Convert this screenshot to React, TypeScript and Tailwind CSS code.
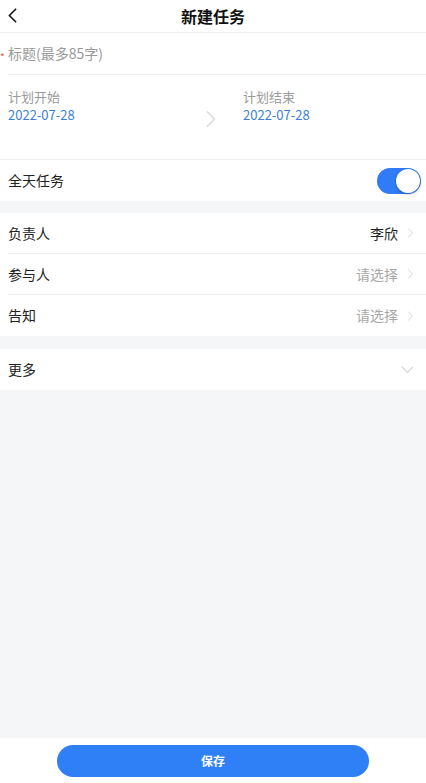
import React from 'react';

const font = { fontFamily: '"Noto Sans CJK SC", "Noto Sans", sans-serif' };

function ChevronRight({ className = '' }: { className?: string }) {
  return (
    <svg viewBox="0 0 10 16" className={className} fill="none">
      <path d="M2 2l6 6-6 6" stroke="currentColor" strokeWidth="1.4" strokeLinecap="round" strokeLinejoin="round" />
    </svg>
  );
}

function PickRow({ label, value, chosen, last }: { label: string; value: string; chosen?: boolean; last?: boolean }) {
  return (
    <div className="pl-2 bg-white">
      <div className={`h-[41px] flex items-center pr-[12px] ${last ? '' : 'border-b border-[#efefef]'}`}>
        <span className="text-[14px] text-[#222]">{label}</span>
        <span className={`ml-auto text-[14px] ${chosen ? 'text-[#222]' : 'text-[#a8a8a8]'}`}>{value}</span>
        <ChevronRight className="w-[7px] h-[12px] ml-[9px] text-[#d2d2d2]" />
      </div>
    </div>
  );
}

export default function App() {
  return (
    <div className="w-[426px] h-[783px] flex flex-col bg-[#f5f6f8] overflow-hidden" style={font}>
      {/* header */}
      <header className="h-[33px] bg-white flex items-center relative border-b border-[#f0f0f0]">
        <svg viewBox="0 0 10 16" className="absolute left-[8px] top-[8px] w-[9px] h-[15px]" fill="none">
          <path d="M8.5 1L1.5 8l7 7" stroke="#111" strokeWidth="1.8" strokeLinecap="round" strokeLinejoin="round" />
        </svg>
        <h1 className="w-full text-center text-[16px] font-bold text-[#111] leading-none">新建任务</h1>
      </header>

      {/* title input */}
      <div className="bg-white pl-2">
        <div className="h-[42px] flex items-center border-b border-[#efefef] relative">
          <span className="absolute left-[-8px] top-[19px] text-[10px] text-[#e54b4b] leading-none">*</span>
          <span className="text-[14px] text-[#9a9a9a]">标题(最多85字)</span>
        </div>
      </div>

      {/* plan dates */}
      <div className="bg-white h-[85px] flex items-start pt-[13px] border-b border-[#efefef]">
        <div className="w-[205px] pl-2">
          <div className="text-[13px] text-[#9a9a9a] leading-[18px]">计划开始</div>
          <div className="text-[13px] text-[#3a7fd6] leading-[18px]">2022-07-28</div>
        </div>
        <ChevronRight className="w-[12px] h-[20px] mt-[21px] text-[#dcdcdc]" />
        <div className="pl-[26px]">
          <div className="text-[13px] text-[#9a9a9a] leading-[18px]">计划结束</div>
          <div className="text-[13px] text-[#3a7fd6] leading-[18px]">2022-07-28</div>
        </div>
      </div>

      {/* all day */}
      <div className="bg-white h-[41px] flex items-center pl-2 pr-[5px]">
        <span className="text-[14px] text-[#222]">全天任务</span>
        <div className="ml-auto w-[44px] h-[26px] rounded-full bg-[#2f7cf6] relative">
          <div className="absolute right-[1px] top-[1px] w-[24px] h-[24px] rounded-full bg-white shadow-[0_1px_3px_rgba(0,0,0,0.3)]" />
        </div>
      </div>

      <div className="h-[12px]" />

      <PickRow label="负责人" value="李欣" chosen />
      <PickRow label="参与人" value="请选择" />
      <PickRow label="告知" value="请选择" last />

      <div className="h-[13px]" />

      {/* more */}
      <div className="bg-white h-[41px] flex items-center pl-2 pr-[12px]">
        <span className="text-[14px] text-[#222]">更多</span>
        <svg viewBox="0 0 16 10" className="ml-auto w-[13px] h-[8px]" fill="none">
          <path d="M1.5 1.5l6.5 6.5 6.5-6.5" stroke="#cfcfcf" strokeWidth="1.3" strokeLinecap="round" strokeLinejoin="round" />
        </svg>
      </div>

      <div className="flex-1" />

      {/* footer */}
      <footer className="h-[45px] bg-white flex items-center justify-center">
        <button className="w-[312px] h-[32px] rounded-full bg-[#2f7ff7] text-white text-[12px] font-bold">保存</button>
      </footer>
    </div>
  );
}
